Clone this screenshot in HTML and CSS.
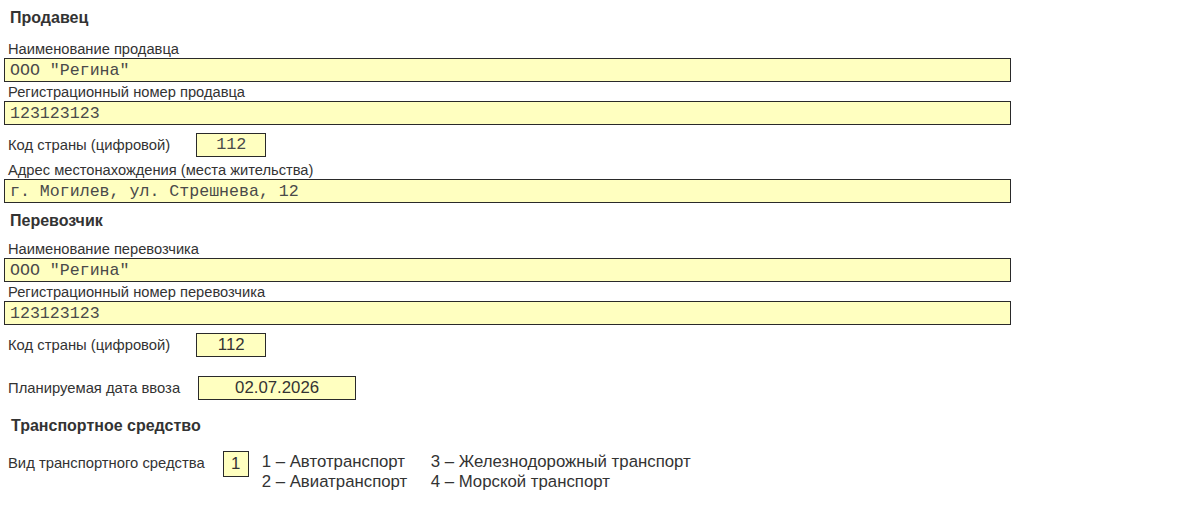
FILE: index.html
```html
<!DOCTYPE html>
<html lang="ru">
<head>
<meta charset="utf-8">
<title>Сведения о продавце и перевозчике</title>
<link rel="stylesheet" href="styles.css">
</head>
<body>
<div class="form">
  <h2 class="section first">Продавец</h2>

  <div class="label">Наименование продавца</div>
  <div class="field mono">ООО "Регина"</div>
  <div class="label">Регистрационный номер продавца</div>
  <div class="field mono">123123123</div>

  <div class="row code-row">
    <span class="row-label">Код страны (цифровой)</span>
    <span class="box code mono">112</span>
  </div>

  <div class="label addr">Адрес местонахождения (места жительства)</div>
  <div class="field mono">г. Могилев, ул. Стрешнева, 12</div>

  <h2 class="section carrier">Перевозчик</h2>

  <div class="label">Наименование перевозчика</div>
  <div class="field mono">ООО "Регина"</div>
  <div class="label">Регистрационный номер перевозчика</div>
  <div class="field mono">123123123</div>

  <div class="row code-row">
    <span class="row-label">Код страны (цифровой)</span>
    <span class="box code">112</span>
  </div>

  <div class="row date-row">
    <span class="row-label small">Планируемая дата ввоза</span>
    <span class="box date">02.07.2026</span>
  </div>

  <h2 class="section transport">Транспортное средство</h2>

  <div class="row kind-row">
    <span class="row-label small">Вид транспортного средства</span>
    <span class="box kind">1</span>
    <div class="options">
      <span>1 – Автотранспорт</span>
      <span>3 – Железнодорожный транспорт</span>
      <span>2 – Авиатранспорт</span>
      <span>4 – Морской транспорт</span>
    </div>
  </div>
</div>
</body>
</html>
```

FILE: styles.css
```css
html, body {
  margin: 0;
  padding: 0;
  background: #ffffff;
}

body {
  font-family: "Liberation Sans", Arial, sans-serif;
  color: #333333;
}

.form {
  width: 1007px;
  padding: 0 0 0 4px;
}

.section {
  margin: 0;
  padding-left: 6px;
  font-size: 16px;
  font-weight: bold;
  line-height: 18px;
  color: #333333;
}

.section.first {
  padding-top: 9px;
}

.section.carrier {
  margin-top: 9px;
}

.label {
  margin-top: 13px;
  padding-left: 4px;
  font-size: 14.7px;
  line-height: 18px;
}

.section.carrier + .label {
  margin-top: 10px;
}

.field + .label {
  margin-top: 1px;
}

.label.addr {
  margin-top: 4px;
}

.field {
  height: 22px;
  border: 1px solid #2a2a2a;
  background: #ffffc0;
  padding-left: 5px;
  line-height: 23px;
  color: #4a4a4a;
}

.mono {
  font-family: "Liberation Mono", "Courier New", monospace;
  font-size: 16.6px;
}

.row {
  display: flex;
  align-items: center;
  padding-left: 4px;
}

.row-label {
  font-size: 14.8px;
}

.box {
  box-sizing: border-box;
  height: 24px;
  border: 1px solid #2a2a2a;
  background: #ffffc0;
  text-align: center;
  line-height: 22px;
  font-size: 16.8px;
}

.code-row {
  margin-top: 8px;
}

.code {
  width: 70px;
  margin-left: 26px;
}

.code.mono {
  color: #4a4a4a;
}

.date-row {
  margin-top: 19px;
}

.date {
  width: 158px;
  margin-left: 18px;
}

.section.transport {
  padding-left: 7px;
  margin-top: 17px;
}

.kind-row {
  margin-top: 16px;
  align-items: flex-start;
}

.kind-row .row-label {
  margin-top: 4px;
}

.kind {
  width: 26px;
  height: 26px;
  line-height: 24px;
  margin-left: 18px;
  margin-top: 0;
}

.options {
  display: grid;
  grid-template-columns: 169px auto;
  margin-left: 13px;
  margin-top: 1px;
  font-size: 16.8px;
  line-height: 20px;
}
```
